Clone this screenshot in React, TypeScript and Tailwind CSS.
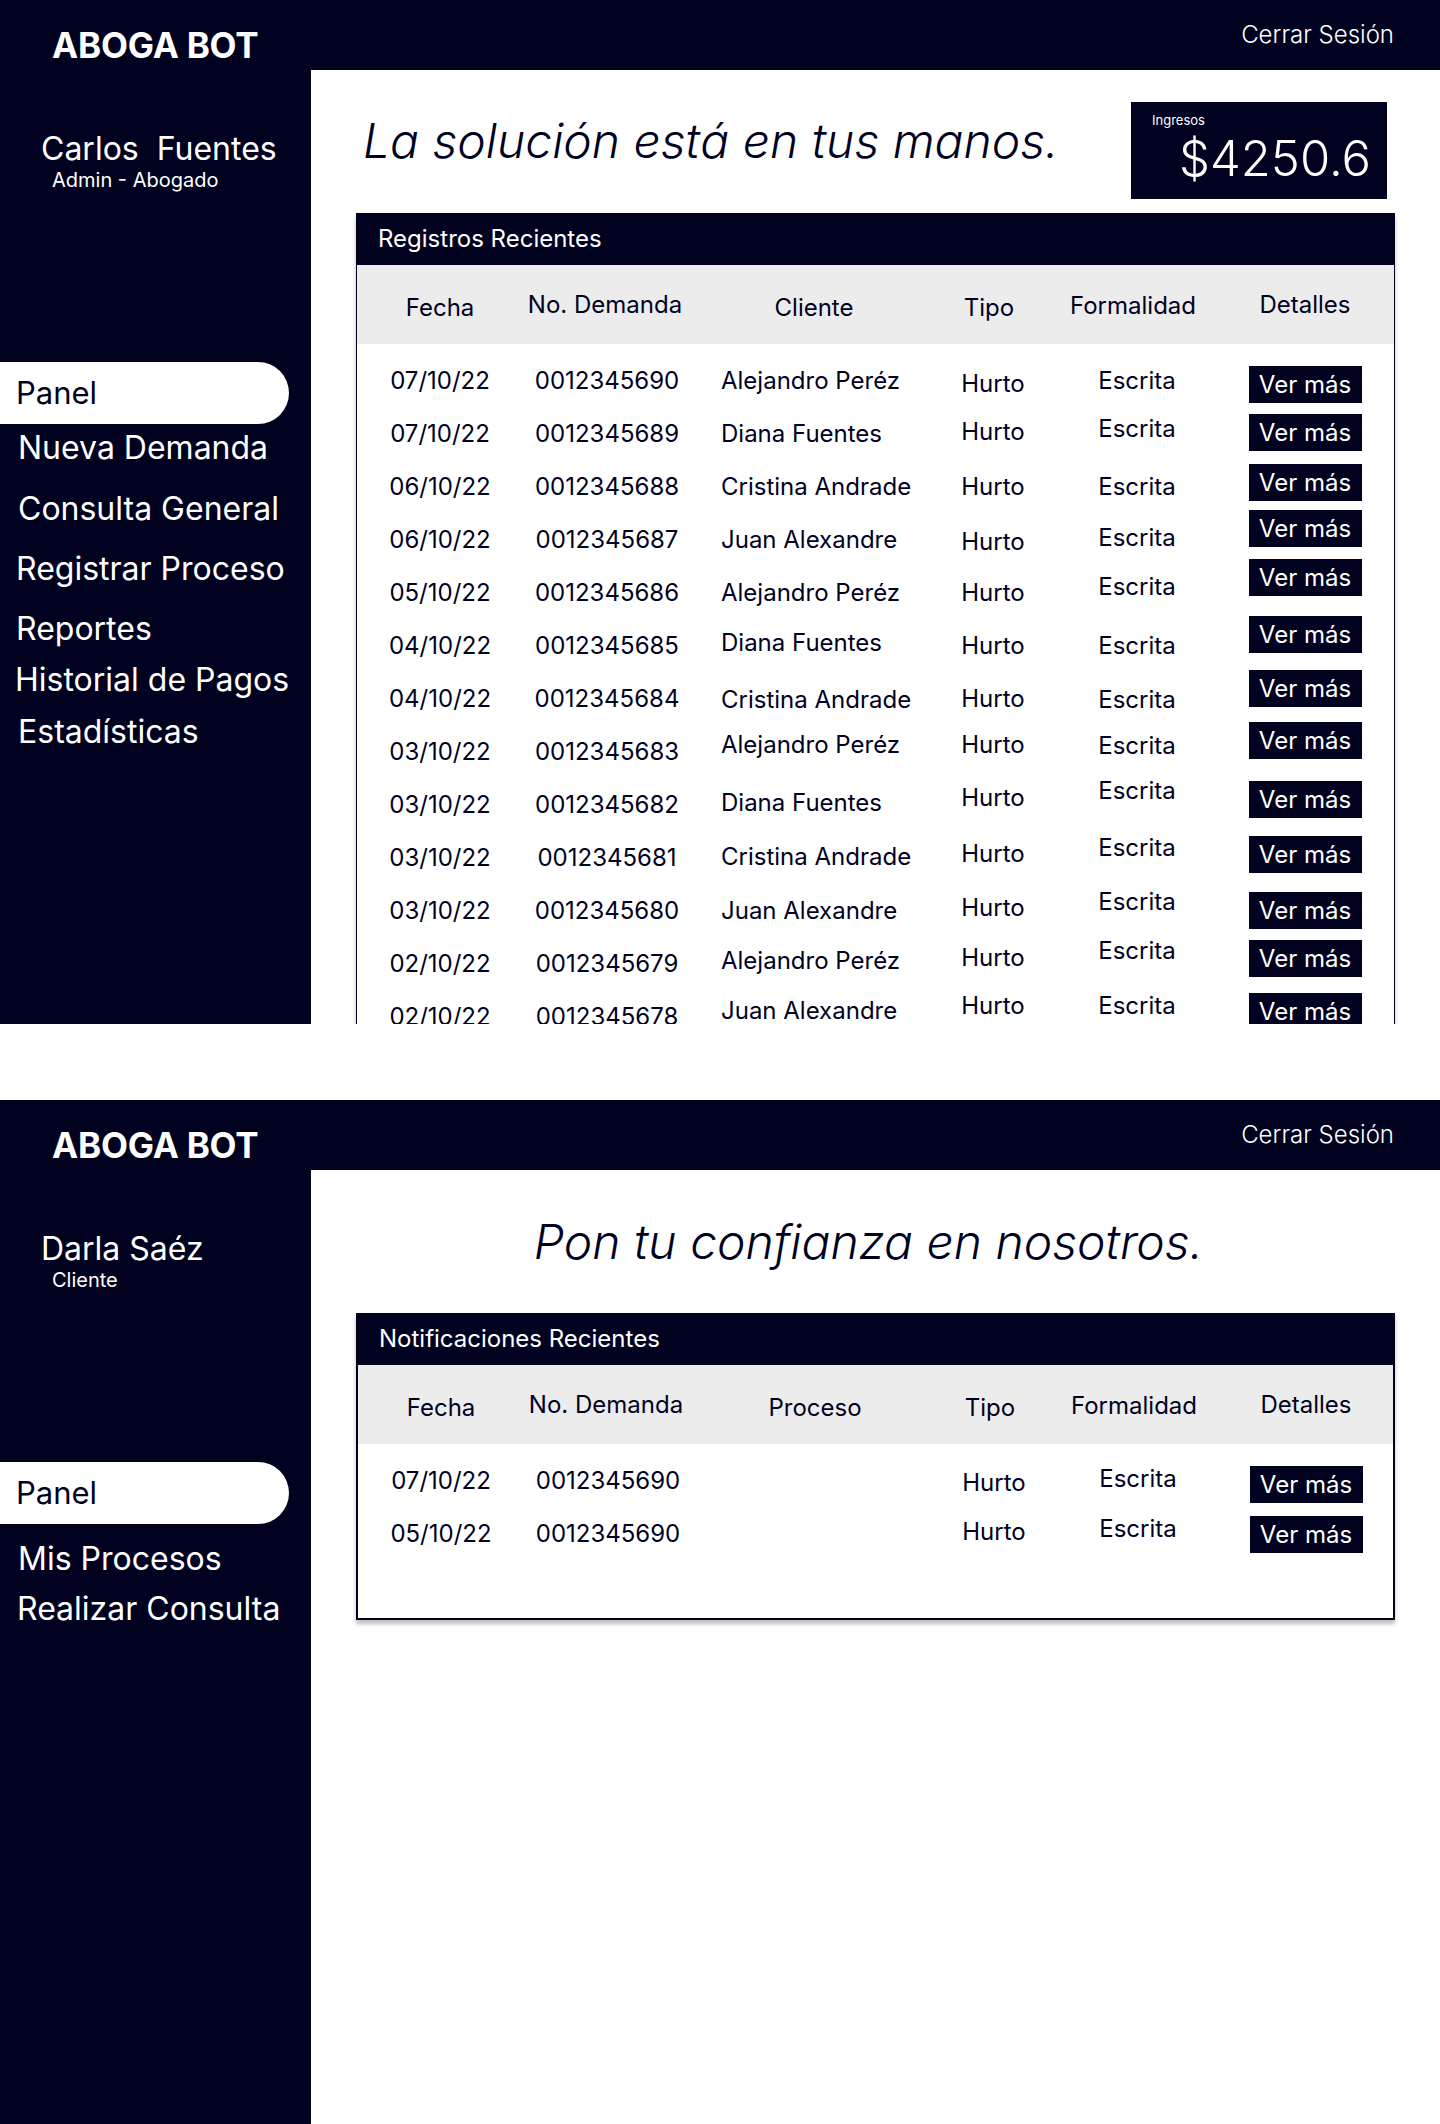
import type { ReactNode } from 'react'

type Row = {
  fecha: string
  num: string
  name: string
  // small vertical offsets of the mockup: [cliente, tipo, formalidad, boton]
  off: [number, number, number, number]
}

const registros: Row[] = [
  { fecha: '07/10/22', num: '0012345690', name: 'Alejandro Peréz', off: [0, 3, 0, 4] },
  { fecha: '07/10/22', num: '0012345689', name: 'Diana Fuentes', off: [0, -2, -5, -1] },
  { fecha: '06/10/22', num: '0012345688', name: 'Cristina Andrade', off: [0, 0, 0, -4] },
  { fecha: '06/10/22', num: '0012345687', name: 'Juan Alexandre', off: [0, 2, -2, -11] },
  { fecha: '05/10/22', num: '0012345686', name: 'Alejandro Peréz', off: [0, 0, -6, -15] },
  { fecha: '04/10/22', num: '0012345685', name: 'Diana Fuentes', off: [-3, 0, 0, -11] },
  { fecha: '04/10/22', num: '0012345684', name: 'Cristina Andrade', off: [1, 0, 1, -10] },
  { fecha: '03/10/22', num: '0012345683', name: 'Alejandro Peréz', off: [-7, -7, -6, -11] },
  { fecha: '03/10/22', num: '0012345682', name: 'Diana Fuentes', off: [-2, -7, -14, -5] },
  { fecha: '03/10/22', num: '0012345681', name: 'Cristina Andrade', off: [-1, -4, -10, -3] },
  { fecha: '03/10/22', num: '0012345680', name: 'Juan Alexandre', off: [0, -3, -9, 0] },
  { fecha: '02/10/22', num: '0012345679', name: 'Alejandro Peréz', off: [-3, -6, -13, -5] },
  { fecha: '02/10/22', num: '0012345678', name: 'Juan Alexandre', off: [-6, -11, -11, -5] },
]

const notificaciones: Row[] = [
  { fecha: '07/10/22', num: '0012345690', name: '', off: [0, 2, -2, 4] },
  { fecha: '05/10/22', num: '0012345690', name: '', off: [0, -2, -5, 1] },
]

const cols = 'grid grid-cols-[166px_164px_254px_96px_192px_152px]'

function Shift({ y, children, className }: { y: number; children: ReactNode; className?: string }) {
  return (
    <div className={className} style={{ transform: `translateY(${y}px)` }}>
      {children}
    </div>
  )
}

function Table({ title, third, rows, closed }: { title: string; third: string; rows: Row[]; closed?: boolean }) {
  return (
    <div
      className={
        closed
          ? 'flex flex-col bg-white border-x-2 border-b-2 border-[#00021f] pb-[58px] shadow-[0_4px_4px_rgba(0,0,0,0.25)]'
          : 'flex flex-col bg-white border-x border-[#00021f] shadow-[0_4px_4px_rgba(0,0,0,0.25)]'
      }
    >
      <div className="h-[52px] bg-[#00021f] flex items-center pl-[21px] text-[24px] text-white">{title}</div>
      <div className={`${cols} h-[79px] pt-[6px] items-center bg-[#ececec] text-[24px] text-[#00021f]`}>
        <span className="text-center">Fecha</span>
        <span className="text-center -mt-[6px]">No. Demanda</span>
        <span className="text-center">{third}</span>
        <span className="text-center">Tipo</span>
        <span className="text-center -mt-[4px]">Formalidad</span>
        <span className="text-center -mt-[6px]">Detalles</span>
      </div>
      <div className="pt-[10px]">
        {rows.map((r, i) => (
          <div key={i} className={`${cols} h-[53px] items-center text-[24px] text-[#00021f] leading-none`}>
            <span className="text-center">{r.fecha}</span>
            <span className="text-center pl-[4px]">{r.num}</span>
            <Shift y={r.off[0]} className="pl-[34px]">
              {r.name}
            </Shift>
            <Shift y={r.off[1]} className="text-center pl-[8px]">
              Hurto
            </Shift>
            <Shift y={r.off[2]} className="text-center pl-[8px]">
              Escrita
            </Shift>
            <Shift y={r.off[3]} className="flex justify-center">
              <button className="h-[37px] w-[113px] bg-[#00021f] text-white text-[24px] leading-none flex items-center justify-center">
                Ver más
              </button>
            </Shift>
          </div>
        ))}
      </div>
    </div>
  )
}

type NavItem = { label: string; mt: string; pl: string }

function Screen({
  name,
  role,
  nav,
  children,
}: {
  name: string
  role: string
  nav: NavItem[]
  children: ReactNode
}) {
  return (
    <section className="h-[1024px] flex flex-col overflow-hidden bg-white">
      <header className="h-[70px] shrink-0 bg-[#00021f] flex items-start justify-between text-white">
        <div className="pl-[52px] pt-[24px] text-[35px] leading-[42px] font-bold tracking-[-0.2px]">ABOGA BOT</div>
        <button className="pr-[46px] h-full flex items-center text-[24px] font-light">Cerrar Sesión</button>
      </header>
      <div className="flex flex-1 min-h-0">
        <aside className="w-[311px] shrink-0 bg-[#00021f] text-white flex flex-col">
          <div className="pt-[60px] pl-[41px] text-[32px] leading-[38px] whitespace-pre">{name}</div>
          <div className="pl-[52px] text-[20px] leading-[24px]">{role}</div>
          <nav className="mt-[170px] flex flex-col">
            <div className="h-[62px] w-[289px] rounded-r-full bg-white text-[#00021f] text-[31px] flex items-center pl-[16px]">
              Panel
            </div>
            {nav.map((n) => (
              <div key={n.label} className={`${n.mt} ${n.pl} text-[32px] leading-[40px]`}>
                {n.label}
              </div>
            ))}
          </nav>
        </aside>
        <main className="flex-1 min-w-0 px-[45px] pt-[32px] flex flex-col">{children}</main>
      </div>
    </section>
  )
}

export default function App() {
  return (
    <div className="w-[1440px] bg-white font-['Inter',_'Liberation_Sans',_sans-serif]">
      <Screen
        name={'Carlos  Fuentes'}
        role="Admin - Abogado"
        nav={[
          { label: 'Nueva Demanda', mt: 'mt-[4px]', pl: 'pl-[18px]' },
          { label: 'Consulta General', mt: 'mt-[21px]', pl: 'pl-[18px]' },
          { label: 'Registrar Proceso', mt: 'mt-[20px]', pl: 'pl-[16px]' },
          { label: 'Reportes', mt: 'mt-[20px]', pl: 'pl-[16px]' },
          { label: 'Historial de Pagos', mt: 'mt-[11px]', pl: 'pl-[15px]' },
          { label: 'Estadísticas', mt: 'mt-[12px]', pl: 'pl-[18px]' },
        ]}
      >
        <div className="h-[97px] flex items-start justify-between">
          <h1 className="ml-[7px] mt-[11px] text-[48px] leading-[56px] font-light italic text-[#00021f]">
            La solución está en tus manos.
          </h1>
          <div className="mr-[8px] h-[97px] w-[256px] bg-[#00021f] text-white flex flex-col">
            <span className="pt-[10px] pl-[21px] text-[13px] leading-[17px]">Ingresos</span>
            <span className="mt-[5px] pr-[16px] text-right text-[49px] leading-none font-light">$4250.6</span>
          </div>
        </div>
        <div className="mt-[14px]">
          <Table title="Registros Recientes" third="Cliente" rows={registros} />
        </div>
      </Screen>

      <div className="h-[76px] bg-white" />

      <Screen
        name="Darla Saéz"
        role="Cliente"
        nav={[
          { label: 'Mis Procesos', mt: 'mt-[15px]', pl: 'pl-[18px]' },
          { label: 'Realizar Consulta', mt: 'mt-[10px]', pl: 'pl-[17px]' },
        ]}
      >
        <div className="h-[97px]">
          <h1 className="mt-[12px] pr-[14px] text-center text-[48px] leading-[56px] font-light italic text-[#00021f]">
            Pon tu confianza en nosotros.
          </h1>
        </div>
        <div className="mt-[14px]">
          <Table title="Notificaciones Recientes" third="Proceso" rows={notificaciones} closed />
        </div>
      </Screen>
    </div>
  )
}
